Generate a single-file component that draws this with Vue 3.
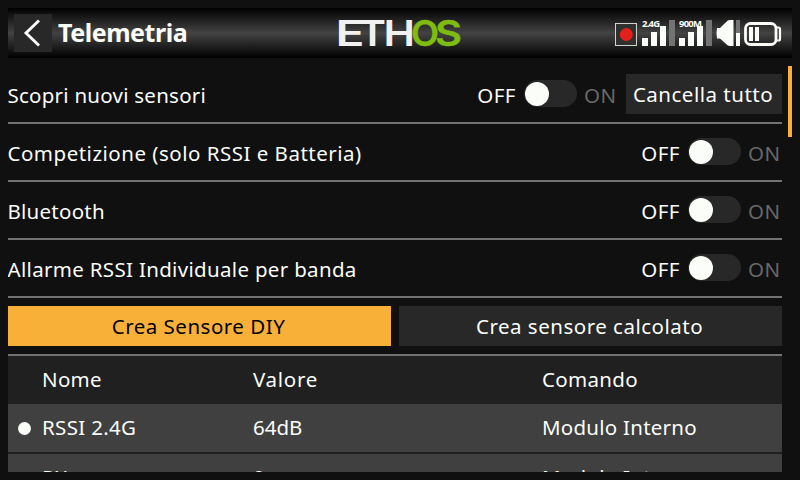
<script setup>
const options = [
  { label: 'Scopri nuovi sensori', cls: 'tight', action: 'Cancella tutto' },
  { label: 'Competizione (solo RSSI e Batteria)', cls: 'loose' },
  { label: 'Bluetooth', cls: 'tight' },
  { label: 'Allarme RSSI Individuale per banda', cls: 'normal' },
]
const sensors = [
  { name: 'RSSI 2.4G', value: '64dB', source: 'Modulo Interno', active: true },
  { name: 'RX', value: '0', source: 'Modulo Interno', active: false },
]
const links = ['2.4G', '900M']
const logo = [
  { ch: 'E', x: -1.5, w: 29, c: 'white' },
  { ch: 'T', x: 22, w: 27, c: 'white' },
  { ch: 'H', x: 46.5, w: 31.5, c: 'white' },
  { ch: 'O', x: 74, w: 28, c: 'green' },
  { ch: 'S', x: 98, w: 27, c: 'green' },
]
</script>

<template>
  <div class="screen">
    <header class="topbar">
      <button class="back">
        <svg width="38" height="38" viewBox="0 0 38 38"><path d="M25 6.5 12 19 25 31.5" fill="none" stroke="#fbfdf9" stroke-width="2.9" /></svg>
      </button>
      <h1>Telemetria</h1>
      <svg class="logo" width="126" height="34" viewBox="0 0 126 34">
        <text v-for="l in logo" :key="l.ch" :x="l.x" y="30" :textLength="l.w" lengthAdjust="spacingAndGlyphs" :class="l.c">{{ l.ch }}</text>
      </svg>
      <div class="status">
        <svg class="rec" width="22" height="23" viewBox="0 0 22 23"><rect x=".5" y=".5" width="21" height="22" fill="#30302f" stroke="#cfd2ce" /><circle cx="11.3" cy="11.5" r="6.5" fill="#e3201b" /></svg>
        <svg v-for="l in links" :key="l" class="signal" width="33" height="26" viewBox="0 0 33 26">
          <path d="M0 18h6v8H0zM9 12h6v14H9zM18 6h6v20h-6z" fill="#fbfdf9" /><path d="M27 0h6v26h-6z" fill="#737373" />
          <text x="0" y="6.5">{{ l }}</text>
        </svg>
        <svg class="speaker" width="24" height="26" viewBox="0 0 24 26"><path d="M1 8H4L11.5 .8Q12.5 0 14 0H17.5V26H14Q12.5 26 11.5 25.2L4 18.500H1Q0 13 1 8z" fill="#fbfdf9" /><path d="M20 0h4v13h-4z" fill="#737373" /><path d="M20 13h4v13h-4z" fill="#fbfdf9" /></svg>
        <svg class="battery" width="38" height="24" viewBox="0 0 38 24"><rect x="1.500" y="1.500" width="30.500" height="21" rx="5" fill="none" stroke="#fbfdf9" stroke-width="2.8" /><path d="M32 5.500h2.500q1.500 0 1.500 1.500v10q0 1.500-1.500 1.500H32" fill="none" stroke="#fbfdf9" stroke-width="2.200" /><path d="M5 5h4v14H5zM11 5h4v14h-4z" fill="#fbfdf9" /></svg>
      </div>
    </header>
    <main class="body">
      <section class="content">
        <div v-for="o in options" :key="o.label" class="row">
          <span class="label" :class="o.cls">{{ o.label }}</span>
          <span class="off">OFF</span>
          <span class="switch"><i></i></span>
          <span class="on">ON</span>
          <button v-if="o.action" class="clear">{{ o.action }}</button>
        </div>
        <div class="actions">
          <button class="primary">Crea Sensore DIY</button>
          <button>Crea sensore calcolato</button>
        </div>
        <div class="table">
          <div class="tr th"><span></span><span>Nome</span><span class="wide">Valore</span><span>Comando</span></div>
          <div v-for="(s, i) in sensors" :key="i" class="tr">
            <span><b v-if="s.active" class="dot"></b></span><span>{{ s.name }}</span><span class="value">{{ s.value }}</span><span class="source">{{ s.source }}</span>
          </div>
        </div>
      </section>
      <div class="scroll"></div>
    </main>
  </div>
</template>

<style>
body { background: #101010; }
</style>
<style scoped>
* { box-sizing: border-box; }
.screen { width: 800px; height: 480px; padding: 8px; overflow: hidden; background: #101010; color: #fbfdf9; font-family: "Noto Sans", sans-serif; font-size: 20.5px; letter-spacing: 0.32px; white-space: nowrap; }
button { border: 0; margin: 0; padding: 0; background: #282828; color: inherit; font: inherit; letter-spacing: 0.5px; }
svg { display: block; flex: none; }
.topbar { height: 50px; padding-left: 6px; display: flex; align-items: center; background: linear-gradient(#000, #434343 50%, #000); }
.back { width: 38px; height: 38px; }
h1 { margin: 0 0 0 6px; width: 279px; font-size: 25px; line-height: 48px; height: 50px; font-weight: 700; letter-spacing: -0.45px; }
.logo { overflow: visible; font-family: Inter, sans-serif; font-size: 35.5px; font-weight: 600; letter-spacing: 0; }
.white { fill: #f1f1f1; }
.green { fill: #7fbc12; stroke: #7fbc12; stroke-width: 0.4px; }
.status { flex: 1; height: 50px; display: flex; align-items: center; justify-content: flex-end; padding-right: 10px; }
.rec { margin-right: 5px; margin-top: 3px; }
.signal { margin-right: 4px; overflow: visible; }
.signal text { font: 700 9.5px "Noto Sans", sans-serif; letter-spacing: -0.8px; fill: #fbfdf9; }
.speaker { margin-right: 4px; }
.battery { margin-top: 2px; }
.body { display: flex; justify-content: space-between; height: 414px; margin-top: 8px; }
.content { width: 774px; height: 406px; overflow: hidden; }
.scroll { width: 4px; height: 71px; background: #f9b038; }
.row { height: 58px; border-bottom: 2px solid #737373; display: flex; align-items: center; line-height: 28px; padding-top: 2px; }
.label { flex: 1; margin-left: -0.5px; }
.tight { letter-spacing: 0.25px; }
.normal { letter-spacing: 0.32px; }
.loose { letter-spacing: 0.5px; }
.wide { letter-spacing: 0.7px; }
.value { letter-spacing: 0; }
.source { letter-spacing: 0.25px; }
.off { letter-spacing: 0.5px; }
.on { width: 34px; color: #686868; letter-spacing: 0.5px; }
.switch { width: 53px; height: 27px; border-radius: 14px; background: #282828; margin: -3px 7px 0 8px; padding: 1.5px 1px; }
.switch i { display: block; width: 24px; height: 24px; border-radius: 50%; background: #fbfdf9; }
.clear { width: 156px; height: 40px; margin: -2px 0 0 8px; padding: 0 2px 1px 0; }
.actions { display: grid; grid-template-columns: 383px 383px; gap: 8px; height: 58px; padding: 8px 0; border-bottom: 2px solid #737373; }
.actions button { padding: 0 2px 1px 0; }
.actions .primary { background: #f9b038; color: #000; }
.tr { display: grid; grid-template-columns: 34px 211px 289px 1fr; height: 50px; line-height: 47px; background: #404040; border-bottom: 2px solid #202020; }
.th { height: 48px; background: #202020; }
.dot { display: block; width: 13px; height: 13px; border-radius: 50%; background: #fbfdf9; margin: 18px 0 0 10px; }
</style>
